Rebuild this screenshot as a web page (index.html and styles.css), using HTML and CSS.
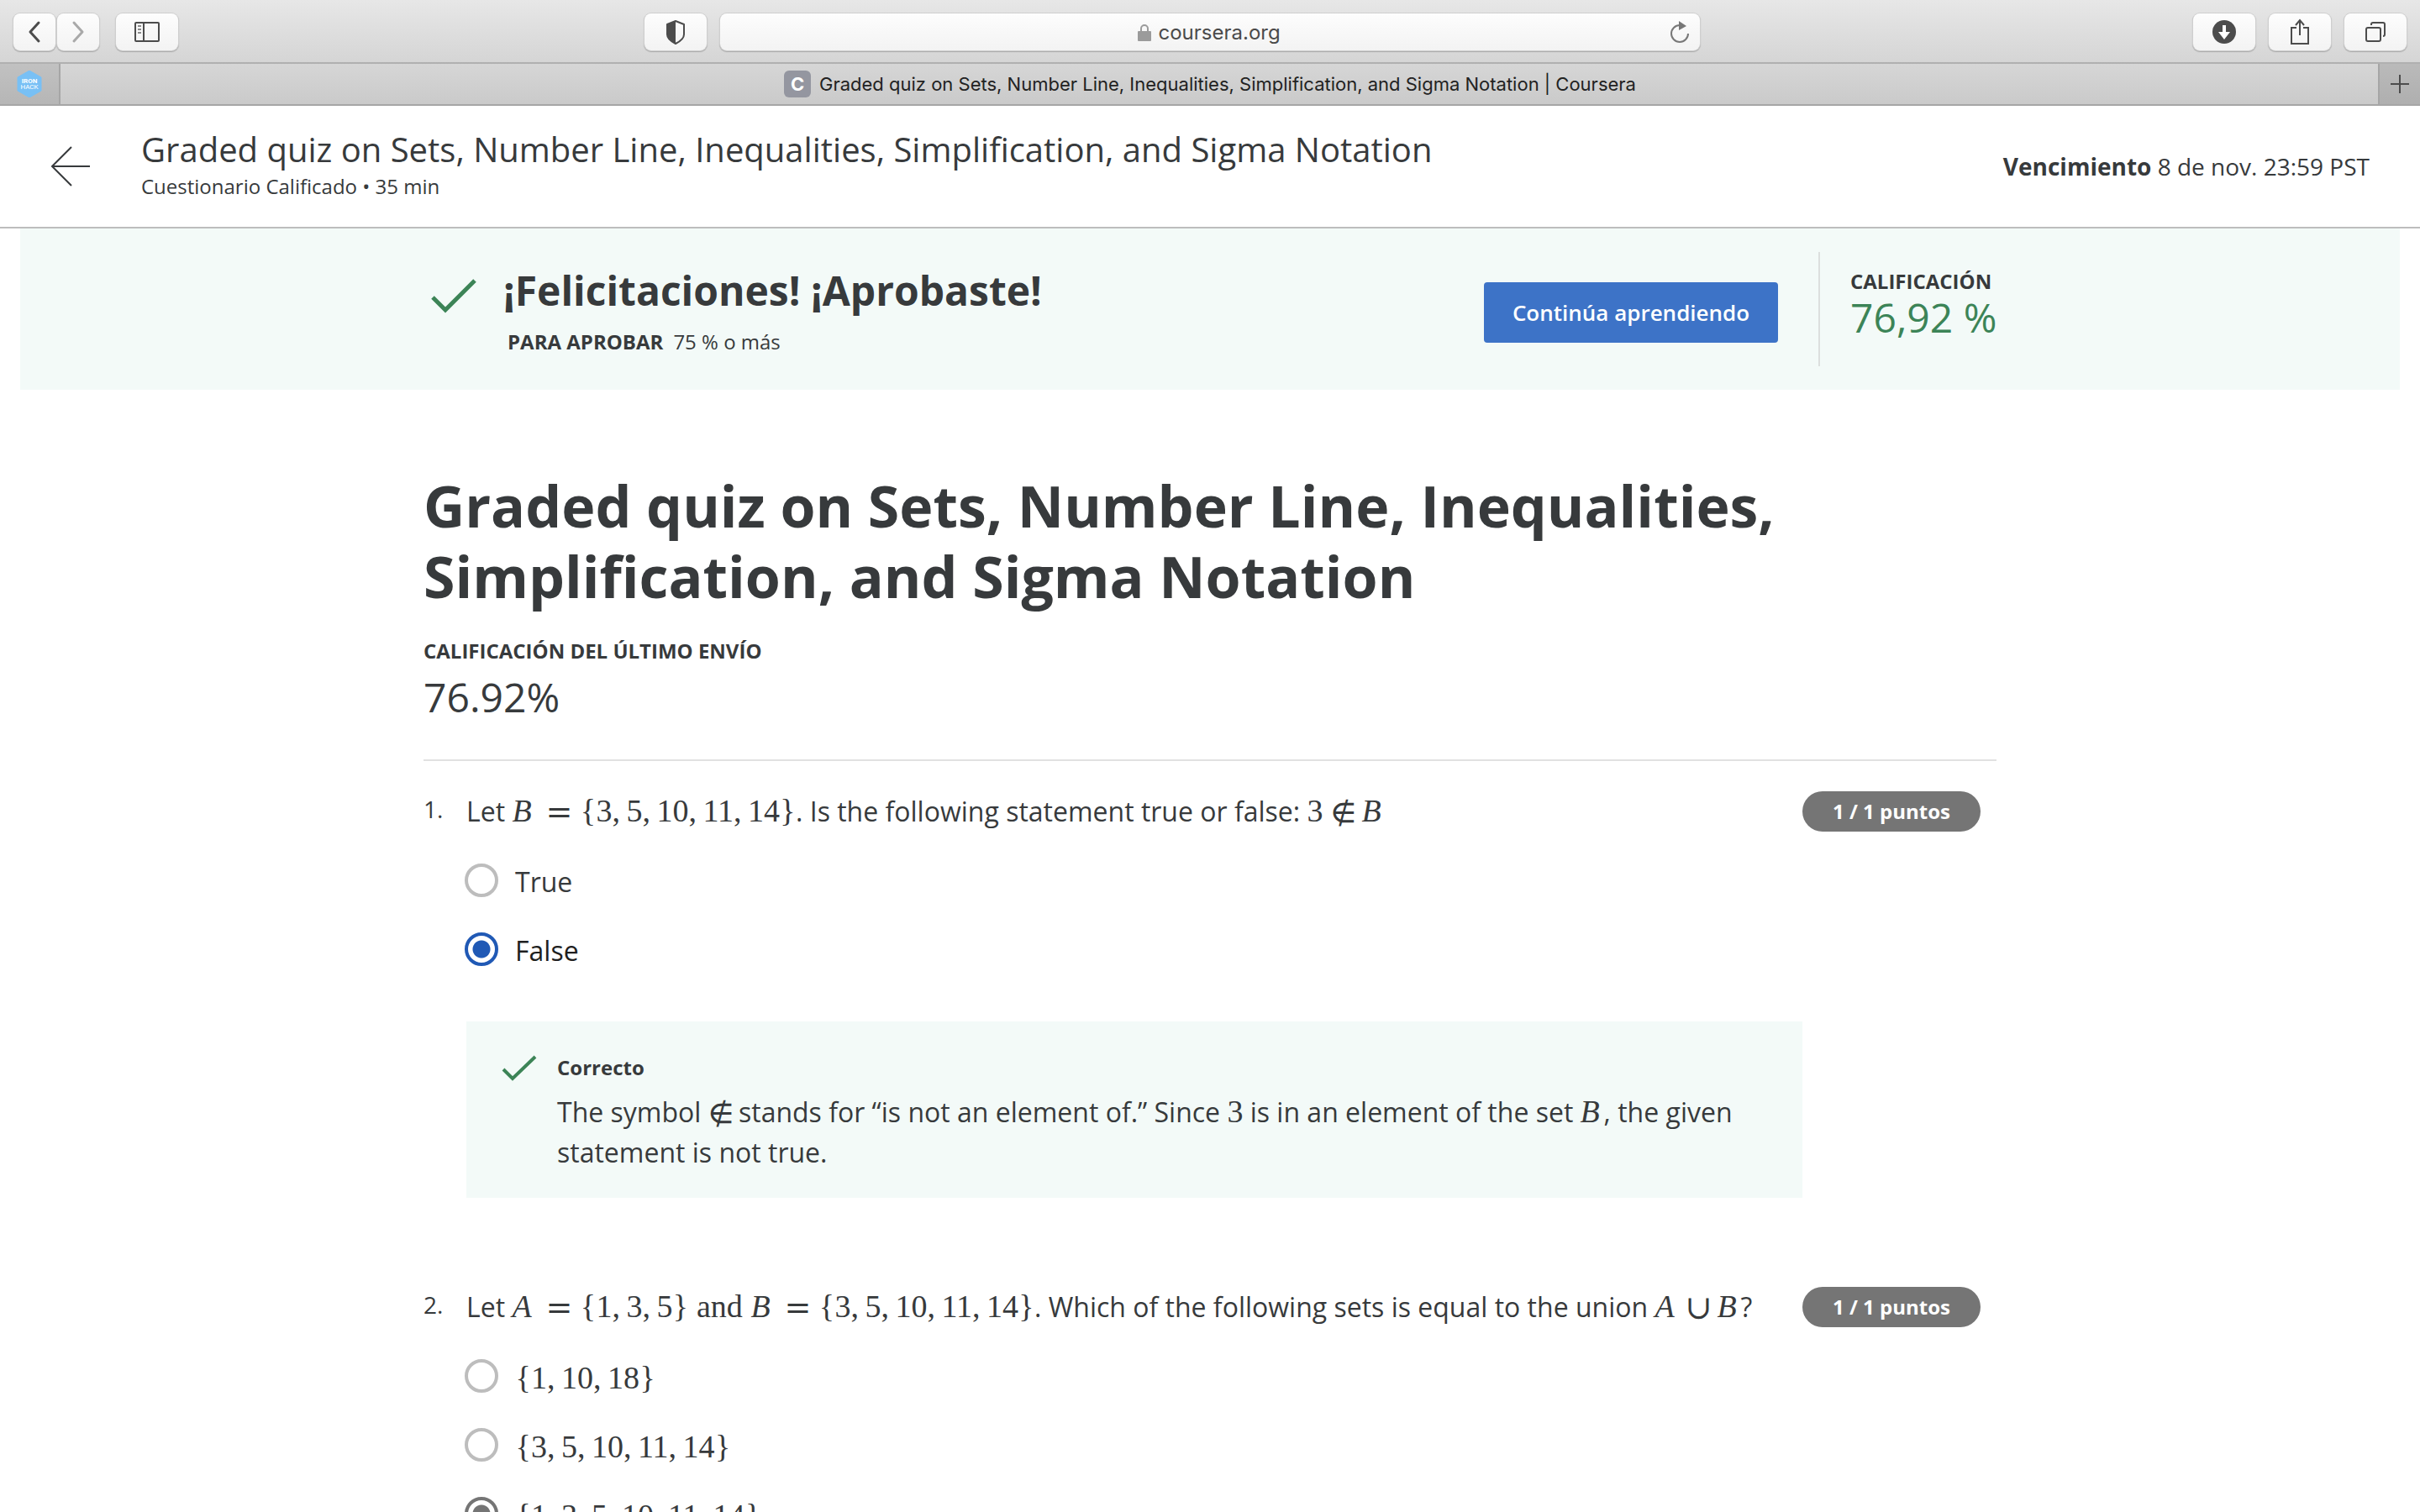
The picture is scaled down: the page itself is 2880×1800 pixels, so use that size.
FILE: index.html
```html
<!DOCTYPE html>
<html lang="es">
<head>
<meta charset="utf-8">
<title>Graded quiz on Sets, Number Line, Inequalities, Simplification, and Sigma Notation | Coursera</title>
<link rel="stylesheet" href="styles.css">
</head>
<body>
<div class="toolbar">
  <div class="tools tools-left">
    <div class="pair">
      <button class="tool narrow" type="button" aria-label="Atrás"><svg width="16" height="28" viewBox="0 0 16 28"><path d="M13 3 3 14l10 11" fill="none" stroke="#4c4c4c" stroke-width="3" stroke-linecap="round" stroke-linejoin="round"/></svg></button>
      <button class="tool narrow" type="button" aria-label="Adelante"><svg width="16" height="28" viewBox="0 0 16 28"><path d="m3 3 10 11L3 25" fill="none" stroke="#a9a9a9" stroke-width="3" stroke-linecap="round" stroke-linejoin="round"/></svg></button>
    </div>
    <button class="tool" type="button" aria-label="Barra lateral"><svg width="32" height="26" viewBox="0 0 32 26"><g fill="none" stroke="#4c4c4c" stroke-width="2"><rect x="2" y="2" width="28" height="22" rx="1"/><path d="M12 2v22"/><path d="M5 6h4M5 10h4M5 14h4" stroke="#8a8a8a"/></g></svg></button>
  </div>
  <div class="tools tools-center">
    <button class="tool" type="button" aria-label="Informe de privacidad"><svg width="24" height="30" viewBox="0 0 24 30"><path d="M12 2 2 6v12c0 5 4 8 10 11 6-3 10-6 10-11V6z" fill="none" stroke="#4c4c4c" stroke-width="2" stroke-linejoin="round"/><path d="M12 2 2 6v12c0 5 4 8 10 11z" fill="#4c4c4c"/></svg></button>
    <div class="address">
      <svg class="lock" width="18" height="22" viewBox="0 0 18 22"><rect x="1" y="9" width="16" height="12" rx="1" fill="#9b9b9b"/><path d="M5 10V6a4 4 0 0 1 8 0v4" fill="none" stroke="#9b9b9b" stroke-width="2"/></svg>
      <input class="url" type="text" value="coursera.org" aria-label="Dirección">
      <button class="reload" type="button" aria-label="Recargar"><svg width="24" height="28" viewBox="0 0 24 28"><path d="M12 5a10 10 0 1 0 10 10" fill="none" stroke="#777" stroke-width="2"/><path d="m11 0 9 6-9 5z" fill="#777"/></svg></button>
    </div>
  </div>
  <div class="tools tools-right">
    <button class="tool" type="button" aria-label="Descargas"><svg width="28" height="28" viewBox="0 0 28 28"><circle cx="14" cy="14" r="14" fill="#4c4c4c"/><path d="M12 6h4v8h5l-7 9-7-9h5z" fill="#fff"/></svg></button>
    <button class="tool" type="button" aria-label="Compartir"><svg width="24" height="32" viewBox="0 0 24 32"><path d="M8 11H2v19h20V11h-6M12 20V3M7 8l5-6 5 6" fill="none" stroke="#4c4c4c" stroke-width="2"/></svg></button>
    <button class="tool" type="button" aria-label="Pestañas"><svg width="26" height="26" viewBox="0 0 26 26"><g fill="none" stroke="#4c4c4c" stroke-width="2"><rect x="2" y="8" width="17" height="16" rx="2"/><path d="M8 5V4a2 2 0 0 1 2-2h12a2 2 0 0 1 2 2v12a2 2 0 0 1-2 2"/></g></svg></button>
  </div>
</div>
<div class="tabs">
  <a class="pinned" href="#ironhack" aria-label="Ironhack"><svg width="30" height="32" viewBox="0 0 30 32"><path d="m15 0 14 8v16l-14 8-14-8V8z" fill="#78c0f5" stroke="#78c0f5" stroke-linejoin="round"/><g fill="#fff" font-family="Roboto, sans-serif" font-size="8" text-anchor="middle"><text x="15" y="15" font-weight="700">IRON</text><text x="15" y="22">HACK</text></g></svg></a>
  <a class="tab" href="#quiz"><span class="favicon">C</span><span>Graded quiz on Sets, Number Line, Inequalities, Simplification, and Sigma Notation | Coursera</span></a>
  <button class="add" type="button" aria-label="Nueva pestaña"><svg width="22" height="22" viewBox="0 0 22 22"><path d="M11 0v22M0 11h22" stroke="#4c4c4c" stroke-width="2"/></svg></button>
</div>
<div class="page">
  <header class="header">
    <a class="back" href="#back" aria-label="Volver"><svg width="48" height="48" viewBox="0 0 48 48"><path d="M47 24H2M25 1 2 24l23 23" fill="none" stroke="#373a3c" stroke-width="2"/></svg></a>
    <div class="heading">
      <div class="title">Graded quiz on Sets, Number Line, Inequalities, Simplification, and Sigma Notation</div>
      <div class="subtitle">Cuestionario Calificado • 35 min</div>
    </div>
    <div class="due"><b>Vencimiento</b> 8 de nov. 23:59 PST</div>
  </header>
  <section class="banner">
    <div class="banner-inner">
      <svg class="banner-check" width="54" height="42" viewBox="0 0 54 42"><path d="m2 23 15 15L52 3" fill="none" stroke="#3c8457" stroke-width="5"/></svg>
      <div class="result">
        <h2>¡Felicitaciones! ¡Aprobaste!</h2>
        <p><b>PARA APROBAR</b><span>75 % o más</span></p>
      </div>
      <button class="cta" type="button">Continúa aprendiendo</button>
      <div class="score">
        <div class="label">CALIFICACIÓN</div>
        <div class="score-value">76,92 %</div>
      </div>
    </div>
  </section>
  <main class="quiz">
    <h1>Graded quiz on Sets, Number Line, Inequalities, Simplification, and Sigma Notation</h1>
    <div class="label">CALIFICACIÓN DEL ÚLTIMO ENVÍO</div>
    <div class="grade">76.92%</div>
    <section class="question">
      <div class="number">1.</div>
      <div class="body">
        <div class="prompt">Let <span class="math"><i>B</i><span class="rel">=</span><span class="brace">{</span>3<span class="comma">,</span>5<span class="comma">,</span>10<span class="comma">,</span>11<span class="comma">,</span>14<span class="brace">}</span></span>. Is the following statement true or false: <span class="math">3<span class="bin">∉</span><i>B</i></span></div>
        <div class="options">
          <label class="option"><input type="radio" name="q1">True</label>
          <label class="option chosen"><input type="radio" name="q1" checked>False</label>
        </div>
        <div class="feedback">
          <svg class="check" width="42" height="31" viewBox="0 0 42 31"><path d="m2 17 11 11L40 2" fill="none" stroke="#3c8457" stroke-width="4"/></svg>
          <div class="explain">
            <div class="label">Correcto</div>
            <p>The symbol <span class="math"><span class="symbol">∉</span></span> stands for “is not an element of.” Since <span class="math">3</span> is in an element of the set <span class="math"><i>B</i></span>, the given statement is not true.</p>
          </div>
        </div>
      </div>
      <div class="points"><span class="badge">1 / 1 puntos</span></div>
    </section>
    <section class="question">
      <div class="number">2.</div>
      <div class="body">
        <div class="prompt">Let <span class="math"><i>A</i><span class="rel">=</span><span class="brace">{</span>1<span class="comma">,</span>3<span class="comma">,</span>5<span class="brace">}</span><span class="word">and</span><i>B</i><span class="rel">=</span><span class="brace">{</span>3<span class="comma">,</span>5<span class="comma">,</span>10<span class="comma">,</span>11<span class="comma">,</span>14<span class="brace">}</span></span>. Which of the following sets is equal to the union <span class="math"><i>A</i><span class="bin">∪</span><i>B</i></span>?</div>
        <div class="options">
          <label class="option"><input type="radio" name="q2"><span class="math"><span class="brace">{</span>1<span class="comma">,</span>10<span class="comma">,</span>18<span class="brace">}</span></span></label>
          <label class="option"><input type="radio" name="q2"><span class="math"><span class="brace">{</span>3<span class="comma">,</span>5<span class="comma">,</span>10<span class="comma">,</span>11<span class="comma">,</span>14<span class="brace">}</span></span></label>
          <label class="option"><input class="muted" type="radio" name="q2" checked><span class="math"><span class="brace">{</span>1<span class="comma">,</span>3<span class="comma">,</span>5<span class="comma">,</span>10<span class="comma">,</span>11<span class="comma">,</span>14<span class="brace">}</span></span></label>
        </div>
      </div>
      <div class="points"><span class="badge">1 / 1 puntos</span></div>
    </section>
  </main>
</div>
</body>
</html>
```
FILE: styles.css
```css
* { box-sizing: border-box; }
body {
  margin: 0;
  height: 100vh;
  display: flex;
  flex-direction: column;
  overflow: hidden;
  background: #fff;
  color: #373a3c;
  font-family: "Open Sans", sans-serif;
  font-size: 32px;
}
h1, h2, p { margin: 0; }
button { font: inherit; cursor: pointer; }
svg { display: block; flex: none; }

/* Browser toolbar */
.toolbar {
  flex: none;
  display: grid;
  grid-template-columns: 1fr auto 1fr;
  align-items: start;
  height: 76px;
  padding: 16px;
  background: linear-gradient(#e7e7e7, #d5d5d5);
  border-bottom: 2px solid #b0b0b0;
}
.tools { display: flex; gap: 16px; }
.tools-left { gap: 20px; }
.tools-center { padding-right: 90px; }
.tools-right { justify-content: flex-end; }
.pair { display: flex; gap: 2px; }
.tool {
  display: flex;
  align-items: center;
  justify-content: center;
  width: 74px;
  height: 44px;
  padding: 0;
  border: 0;
  border-radius: 8px;
  background: linear-gradient(#fdfdfd, #f3f3f3);
  box-shadow: 0 0 0 1px #cfcfcf, 0 1px 1px 1px #a9a9a9;
}
.narrow { width: 50px; }
.address {
  display: flex;
  align-items: center;
  width: 40.5vw;
  height: 44px;
  padding: 2px 12px 0;
  border-radius: 8px;
  background: linear-gradient(#fdfdfd, #f3f3f3);
  box-shadow: 0 0 0 1px #cfcfcf, 0 1px 1px 1px #a9a9a9;
}
.lock { margin-left: auto; }
.url {
  width: 148px;
  margin: 0 auto 0 7px;
  padding: 0;
  border: 0;
  background: none;
  color: #4a4a4a;
  font: 24px/32px Inter, sans-serif;
}
.reload { padding: 0; border: 0; background: none; margin-left: -24px; }

/* Tab strip */
.tabs {
  flex: none;
  display: flex;
  height: 50px;
  border-bottom: 2px solid #a6a6a6;
  background: linear-gradient(#d6d6d6, #cacaca);
  font: 22px/32px Inter, sans-serif;
}
.pinned {
  display: flex;
  align-items: center;
  width: 72px;
  padding-left: 20px;
  border-right: 2px solid #a6a6a6;
  background: linear-gradient(#c1c1c1, #b6b6b6);
}
.tab {
  flex: 1;
  display: flex;
  align-items: center;
  justify-content: center;
  gap: 10px;
  padding-right: 22px;
  color: #222;
  text-decoration: none;
}
.favicon {
  width: 32px;
  height: 32px;
  border-radius: 6px;
  background: #9496a0;
  color: #fff;
  font-weight: 700;
  text-align: center;
}
.add {
  display: flex;
  align-items: center;
  justify-content: center;
  width: 50px;
  padding: 0;
  border: 0;
  border-left: 2px solid #a6a6a6;
  background: linear-gradient(#bababa, #afafaf);
}

/* Quiz header */
.page { flex: 1; min-height: 0; overflow: hidden; }
.header {
  display: flex;
  align-items: center;
  height: 146px;
  padding: 0 60px;
  border-bottom: 2px solid #bdbdbd;
}
.heading { flex: 1; margin-left: 60px; padding-bottom: 4px; }
.title { font-size: 40px; line-height: 52px; }
.subtitle { font-size: 24px; line-height: 36px; }
.due { font-size: 28px; line-height: 40px; }

/* Result banner */
.banner {
  margin: 0 24px;
  padding: 28px 0;
  background: #f3faf8;
}
.banner-inner {
  display: flex;
  align-items: flex-start;
  max-width: 1872px;
  margin: 0 auto;
}
.banner-check { margin: 31px 32px 0 9px; }
.result { flex: 1; padding-top: 14px; }
.result h2 { font-size: 48px; line-height: 64px; }
.result p {
  display: flex;
  gap: 12px;
  padding: 11px 0 0 5px;
  font-size: 24px;
  line-height: 36px;
}
.cta {
  width: 350px;
  height: 72px;
  margin: 36px 48px 0 0;
  padding: 0;
  border: 0;
  border-radius: 4px;
  background: #3d73c7;
  color: #fff;
  font-size: 26px;
  font-weight: 600;
}
.score {
  width: 212px;
  height: 136px;
  padding: 17px 0 0 36px;
  border-left: 2px solid #dcdfde;
}
.label { font-size: 24px; font-weight: 700; line-height: 36px; }
.score-value {
  color: #3c8457;
  font-size: 48px;
  line-height: 50px;
  white-space: nowrap;
}

/* Quiz */
.quiz { max-width: 1872px; margin: 0 auto; padding-top: 96px; }
.quiz h1 { margin-bottom: 29px; font-size: 68px; line-height: 84px; }
.grade {
  margin-top: 5px;
  padding-bottom: 42px;
  border-bottom: 2px solid #e1e1e1;
  font-size: 48px;
  line-height: 64px;
}
.question { display: flex; padding: 36px 0 70px; }
.number { width: 51px; font-size: 28px; line-height: 42px; }
.body { flex: 1; line-height: 48px; }
.points { width: 231px; }
.badge {
  display: block;
  width: 212px;
  border-radius: 24px;
  background: #757575;
  color: #fff;
  font-size: 24px;
  font-weight: 700;
  line-height: 48px;
  text-align: center;
}
.options {
  display: grid;
  gap: 38px;
  margin: 38px 0 0 -2px;
  line-height: 44px;
}
.option { display: flex; gap: 20px; height: 44px; }
.chosen { color: #1f1f1f; }
.option input {
  appearance: none;
  flex: none;
  width: 40px;
  height: 40px;
  margin: 0;
  border: 4px solid #bdbdbd;
  border-radius: 50%;
}
.option input:checked {
  border-color: #2059b5;
  background: radial-gradient(circle, #2059b5 10px, #fff 11px);
}
.option input.muted:checked {
  border-color: #757575;
  background: radial-gradient(circle, #757575 10px, #fff 11px);
}
.feedback {
  display: flex;
  gap: 24px;
  margin-top: 62px;
  padding: 37px 60px 30px 42px;
  background: #f3faf8;
}
.check { margin-top: 3px; }
.explain p { margin-top: 11px; }

/* Inline formulas */
.math {
  font-family: "Liberation Serif", serif;
  font-size: 38px;
  line-height: 38px;
  white-space: nowrap;
}
.option .math { line-height: 44px; }
.math i, .rel, .bin, .symbol, .brace, .comma, .word { display: inline-block; }
.rel, .bin, .symbol {
  font-family: "DejaVu Math TeX Gyre", "Liberation Serif", serif;
  text-align: center;
}
.math i { width: 28px; }
.rel { width: 29px; margin: 0 11px 0 13px; }
.bin { width: 28px; margin: 0 9px; }
.symbol { width: 28px; }
.brace { width: 19px; text-align: center; }
.comma { width: 17px; }
.word { width: 62px; margin: 0 6px; text-align: center; }
```
